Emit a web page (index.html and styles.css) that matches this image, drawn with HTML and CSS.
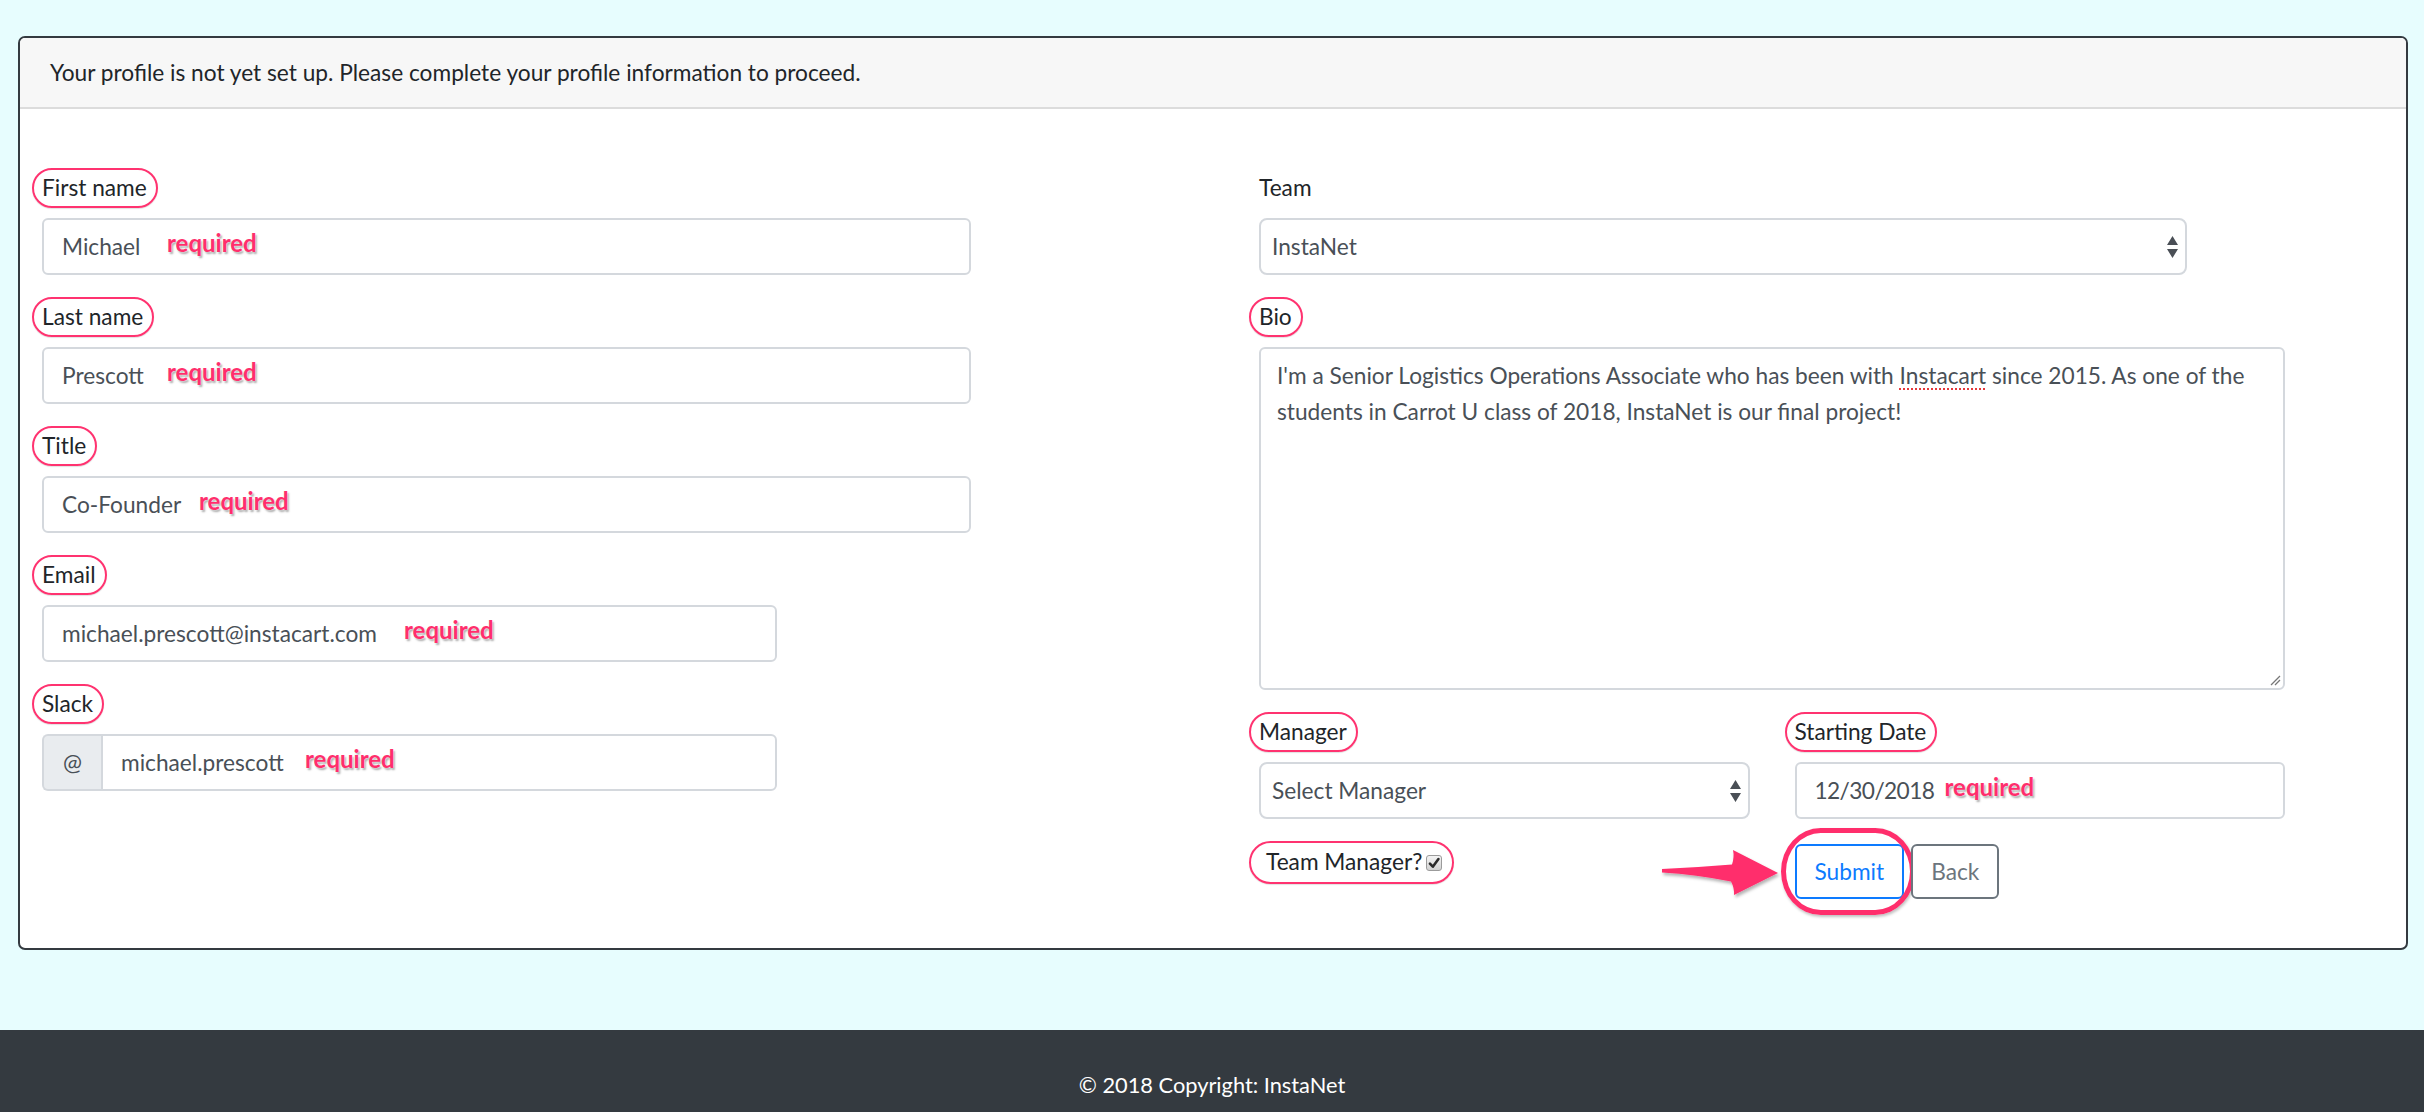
FILE: index.html
```html
<!DOCTYPE html>
<html lang="en">
<head>
<meta charset="utf-8">
<title>InstaNet – Profile setup</title>
<link rel="stylesheet" href="styles.css">
</head>
<body>
<main class="page">
  <section class="card">
    <header class="card-header">Your profile is not yet set up. Please complete your profile information to proceed.</header>
    <form class="card-body">
      <div class="col">
        <div class="group">
          <label class="lbl marked">First name</label>
          <div class="field w-long">
            <input class="ctl" type="text" value="Michael">
            <span class="req r-first">required</span>
          </div>
        </div>
        <div class="group">
          <label class="lbl marked">Last name</label>
          <div class="field w-long">
            <input class="ctl" type="text" value="Prescott">
            <span class="req r-last">required</span>
          </div>
        </div>
        <div class="group">
          <label class="lbl marked">Title</label>
          <div class="field w-long">
            <input class="ctl" type="text" value="Co-Founder">
            <span class="req r-title">required</span>
          </div>
        </div>
        <div class="group">
          <label class="lbl marked">Email</label>
          <div class="field w-short">
            <input class="ctl" type="text" value="michael.prescott@instacart.com">
            <span class="req r-email">required</span>
          </div>
        </div>
        <div class="group">
          <label class="lbl marked">Slack</label>
          <div class="field w-short input-group">
            <span class="prepend">@</span>
            <input class="ctl ctl-joined" type="text" value="michael.prescott">
            <span class="req r-slack">required</span>
          </div>
        </div>
      </div>

      <div class="col">
        <div class="group">
          <label class="lbl">Team</label>
          <div class="field select-wrap w-team">
            <select class="ctl sel"><option>InstaNet</option></select>
            <svg class="updown" viewBox="0 0 11 22" aria-hidden="true"><path d="M5.5 0 L11 9 L0 9 Z M0 13 L11 13 L5.5 22 Z"/></svg>
          </div>
        </div>
        <div class="group">
          <label class="lbl marked">Bio</label>
          <div class="textarea" role="textbox"><span class="ln">I'm a Senior Logistics Operations Associate who has been with <span class="spell">Instacart</span> since 2015. As one of the</span> <span class="ln">students in Carrot U class of 2018, InstaNet is our final project!</span><svg class="grip" viewBox="0 0 12 12" aria-hidden="true"><path d="M11 2 L2 11 M11 6 L6 11" stroke="#777" stroke-width="1.3" fill="none"/></svg></div>
        </div>
        <div class="pair">
          <div class="group">
            <label class="lbl marked">Manager</label>
            <div class="field select-wrap">
              <select class="ctl sel"><option>Select Manager</option></select>
              <svg class="updown" viewBox="0 0 11 22" aria-hidden="true"><path d="M5.5 0 L11 9 L0 9 Z M0 13 L11 13 L5.5 22 Z"/></svg>
            </div>
          </div>
          <div class="group">
            <label class="lbl marked">Starting Date</label>
            <div class="field">
              <input class="ctl ctl-date" type="text" value="12/30/2018">
              <span class="req r-date">required</span>
            </div>
          </div>
        </div>
        <div class="pair actions">
          <div>
            <label class="lbl marked check">Team Manager?<span class="cb"><svg viewBox="0 0 12 12" aria-hidden="true"><path d="M2.5 6.5 L5 9.2 L9.8 2.6" stroke="#2b2b2b" stroke-width="2.2" fill="none" stroke-linecap="round" stroke-linejoin="round"/></svg></span></label>
          </div>
          <div class="buttons">
            <svg class="arrow" viewBox="0 0 130 60" aria-hidden="true">
              <defs>
                <filter id="sh" x="-10%" y="-20%" width="130%" height="160%">
                  <feDropShadow dx="1.5" dy="2.5" stdDeviation="1.5" flood-color="#000" flood-opacity="0.3"/>
                </filter>
              </defs>
              <path filter="url(#sh)" fill="#ff2e6c" d="M6 26 Q40 24.5 76 21.5 Q78.5 14 77 7 L122 30 L78 52 Q78.5 45 75 38.5 Q40 31.5 6 29.5 Z"/>
            </svg>
            <button type="button" class="btn btn-submit">Submit</button>
            <button type="button" class="btn btn-back">Back</button>
          </div>
        </div>
      </div>
    </form>
  </section>
</main>
<footer class="footer">© 2018 Copyright: InstaNet</footer>
</body>
</html>
```
FILE: styles.css
```css
* { box-sizing: border-box; }

html, body {
  margin: 0;
  padding: 0;
}

body {
  background: #e7fdfe;
  font-family: Lato, "Open Sans", sans-serif;
  font-size: 22.7px;
  line-height: 36px;
  color: #212529;
}

.page {
  padding: 36px 16px 80px 18px;
}

.card {
  background: #fff;
  border: 2px solid #343a40;
  border-radius: 7px;
  overflow: visible;
}

.card-header {
  background: #f7f7f7;
  border-bottom: 2px solid #dcdcdc;
  border-radius: 5px 5px 0 0;
  padding: 17px 30px 16px 30px;
  color: #212529;
}

.card-body {
  display: grid;
  grid-template-columns: 1026px 1026px;
  column-gap: 191px;
  align-items: start;
  padding: 61px 0 49px 22px;
  margin: 0;
}

.group {
  margin-bottom: 24px;
}

.lbl {
  display: inline-block;
  position: relative;
  margin-bottom: 12px;
  line-height: 36px;
  color: #212529;
}

.marked::after {
  content: "";
  position: absolute;
  top: -2px;
  bottom: -2px;
  left: -10px;
  right: -11px;
  border: 2px solid #ff3370;
  border-radius: 22px;
  box-shadow: 0 1px 1px rgba(0,0,0,0.12);
  pointer-events: none;
}

.field {
  position: relative;
  display: flex;
}

.w-long { width: 929px; }
.w-short { width: 735px; }
.w-team { width: 928px; }

.ctl {
  display: block;
  width: 100%;
  height: 57px;
  margin: 0;
  padding: 0 18px;
  font: inherit;
  color: #495057;
  background: #fff;
  border: 2px solid #d4d8dd;
  border-radius: 6px;
  outline: none;
}

.ctl-date {
  letter-spacing: -0.6px;
}

.input-group .prepend {
  flex: 0 0 59px;
  height: 57px;
  display: flex;
  align-items: center;
  justify-content: center;
  background: #e9ecef;
  border: 2px solid #d4d8dd;
  border-right: none;
  border-radius: 6px 0 0 6px;
  color: #495057;
}

.ctl-joined {
  flex: 1;
  border-radius: 0 6px 6px 0;
}

.req {
  position: absolute;
  top: 7px;
  font-size: 24px;
  font-weight: 700;
  color: #ff2e6c;
  pointer-events: none;
  text-shadow: 0 0 2px #fff, 1.5px 2px 2px rgba(0,0,0,0.35);
}

.r-first { left: 125px; }
.r-last { left: 125px; }
.r-title { left: 157px; }
.r-email { left: 362px; }
.r-slack { left: 263px; }
.r-date { left: 150px; }

.sel {
  -webkit-appearance: none;
  appearance: none;
  padding: 0 40px 0 11px;
  border-radius: 8px;
}

.updown {
  position: absolute;
  right: 9px;
  top: 18px;
  width: 11px;
  height: 22px;
  fill: #4a4f56;
  pointer-events: none;
}

.textarea {
  position: relative;
  height: 343px;
  padding: 9px 16px;
  border: 2px solid #d4d8dd;
  border-radius: 6px;
  color: #495057;
  line-height: 36px;
}

.spell {
  text-decoration: underline dotted #e5383b;
  text-decoration-thickness: 2px;
  text-underline-offset: 4px;
}

.grip {
  position: absolute;
  right: 2px;
  bottom: 2px;
  width: 12px;
  height: 12px;
}

.pair {
  display: grid;
  grid-template-columns: 1fr 1fr;
  column-gap: 45px;
}

.actions {
  margin-top: 1px;
}

.check {
  margin-left: 7px;
  margin-bottom: 0;
}

.check::after {
  left: -17px;
  right: -12px;
  top: -3px;
  bottom: -4px;
}

.cb {
  display: inline-block;
  width: 16px;
  height: 16px;
  margin-left: 4px;
  vertical-align: -1px;
  border: 1px solid #9b9b9b;
  border-radius: 3px;
  background: linear-gradient(#f4f4f4, #d2d2d2);
}

.cb svg {
  display: block;
  width: 14px;
  height: 14px;
}

.buttons {
  position: relative;
  display: flex;
  align-items: flex-start;
  gap: 7px;
}

.btn {
  position: relative;
  height: 55px;
  padding: 0 18px;
  font: inherit;
  background: #fff;
  border: 2px solid;
  border-radius: 6px;
  cursor: pointer;
}

.btn-submit {
  color: #0d7bff;
  border-color: #0d7bff;
}

.btn-submit::after {
  content: "";
  position: absolute;
  top: -18px;
  bottom: -18px;
  left: -16px;
  right: -13px;
  border: 5px solid #ff2e6c;
  border-radius: 42px / 46px;
  box-shadow: 1px 2px 3px rgba(0,0,0,0.25);
  pointer-events: none;
}

.btn-back {
  color: #6c757d;
  border-color: #6c757d;
}

.arrow {
  position: absolute;
  left: -139px;
  top: -1px;
  width: 130px;
  height: 60px;
  overflow: visible;
}

.footer {
  background: #343a40;
  color: #fff;
  text-align: center;
  padding: 37px 0 37px;
  font-size: 21.8px;
}
```
